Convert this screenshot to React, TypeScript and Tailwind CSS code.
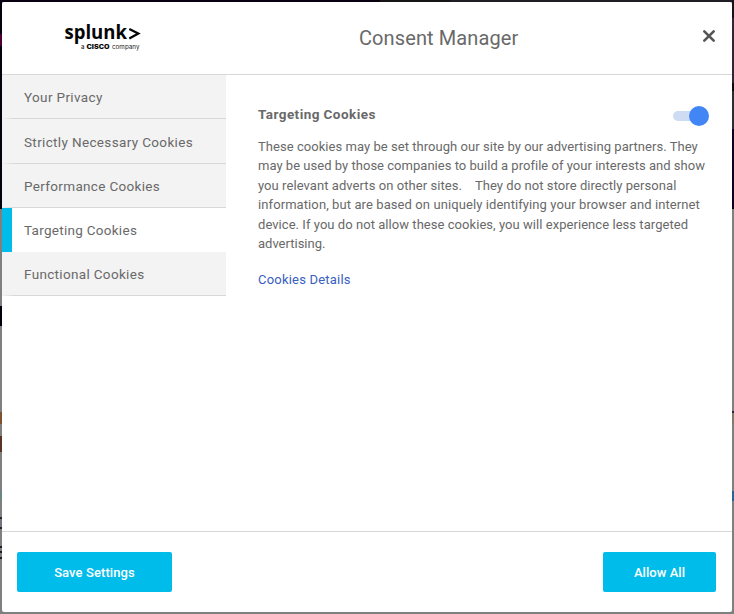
import React from "react";

const tabs = [
  { label: "Your Privacy", box: "h-[44px]", text: "tracking-[0.36px]" },
  { label: "Strictly Necessary Cookies", box: "h-[45px]", text: "tracking-[0.35px]" },
  { label: "Performance Cookies", box: "h-[44px]", text: "tracking-[0.33px]" },
  { label: "Targeting Cookies", box: "h-[44px]", text: "tracking-[0.28px]", active: true },
  { label: "Functional Cookies", box: "h-[44px]", text: "tracking-[0.33px]" },
];

const lines = [
  { text: "These cookies may be set through our site by our advertising partners. They", css: "tracking-[0.045px]" },
  { text: "may be used by those companies to build a profile of your interests and show", css: "tracking-[0.025px]" },
  { text: "you relevant adverts on other sites.\u00a0\u00a0\u00a0 They do not store directly personal", css: "tracking-[0.065px]" },
  { text: "information, but are based on uniquely identifying your browser and internet", css: "tracking-[0.09px]" },
  { text: "device. If you do not allow these cookies, you will experience less targeted", css: "tracking-[0.05px]" },
  { text: "advertising.", css: "tracking-[0px]" },
];

const leftEdge = [
  "h-[34px] bg-[#07000f]", "h-[12px] bg-[#4d0033]", "h-[163px] bg-[#07000f]",
  "h-[97px] bg-[#7f7f7f]", "h-[20px] bg-[#02000c]", "h-[86px] bg-[#7f7f7f]",
  "h-[12px] bg-[#80512a]", "h-[12px] bg-[#7f7f7f]", "h-[16px] bg-[#593323]",
  "h-[39px] bg-[#7f7f7f]", "h-[9px] bg-[#6b8585]", "h-[17px] bg-[#7f7f7f]",
  "h-[2px] bg-[#252535]", "h-[8px] bg-[#74747a]", "h-[2px] bg-[#252535]",
  "h-[17px] bg-[#7f7f7f]", "h-[2px] bg-[#1c1c28]", "h-[3px] bg-[#7f7f7f]",
  "h-[2px] bg-[#1c1c28]", "h-[4px] bg-[#7f7f7f]", "h-[2px] bg-[#1c1c28]", "grow bg-[#7f7f7f]",
];

const rightEdge = [
  "h-[18px] bg-[#17131c]", "h-[65px] bg-[#302638]", "h-[8px] bg-[#0c0b10]",
  "h-[38px] bg-[#2d2b34]", "h-[80px] bg-[#0b001e]", "h-[202px] bg-[#7f7f7f]",
  "h-[2px] bg-[#252535]", "h-[11px] bg-[#817969]", "h-[67px] bg-[#7f7f7f]",
  "h-[10px] bg-[#2b628f]", "grow bg-[#7f7f7f]",
];

function Edge({ parts }: { parts: string[] }) {
  return (
    <div className="flex w-[2px] shrink-0 flex-col">
      {parts.map((part, i) => <div key={i} className={part} />)}
    </div>
  );
}

function Logo() {
  return (
    <svg width="78" height="30" viewBox="0 0 78 30" className="block overflow-visible" aria-label="splunk, a Cisco company">
      <text x="0.5" y="17.2" fontFamily="Open Sans, sans-serif" fontWeight="700" fontSize="20" textLength="62.5" lengthAdjust="spacingAndGlyphs" fill="#050505">splunk</text>
      <path d="M65.3 7 74.3 11.6 65.3 16.5" fill="none" stroke="#050505" strokeWidth="2.3" />
      <text x="17" y="27" fontFamily="Inter, sans-serif" fontWeight="600" fontSize="6" fill="#333">a</text>
      <text x="22.5" y="27" fontFamily="Inter, sans-serif" fontWeight="900" fontSize="6" textLength="23" lengthAdjust="spacingAndGlyphs" fill="#050505">CISCO</text>
      <text x="48" y="27" fontFamily="Inter, sans-serif" fontSize="6" textLength="27.5" lengthAdjust="spacingAndGlyphs" fill="#222">company</text>
    </svg>
  );
}

export default function App() {
  return (
    <div className="flex h-[614px] w-[734px] flex-col overflow-hidden bg-[#7f7f7f] font-['Roboto',sans-serif] text-[#696969]">
      <div className="flex h-[2px] shrink-0">
        <div className="w-[380px] bg-[#080010]" />
        <div className="w-[70px] bg-[#171417]" />
        <div className="grow bg-[#211d24]" />
      </div>
      <div className="-mt-[2px] flex grow">
        <Edge parts={leftEdge} />
        <main className="my-[2px] flex w-[730px] flex-col overflow-hidden rounded-[2px] bg-white">
          <header className="flex h-[73px] shrink-0 items-start border-b border-[#d8d8d8]">
            <div className="w-[234px] pl-[62px] pt-[20px]"><Logo /></div>
            <h1 className="w-[406px] whitespace-nowrap pl-[123px] pt-[22px] text-[20px] leading-[28px] tracking-[0.1px]">Consent Manager</h1>
            <button aria-label="Close" className="ml-[60px] mt-[27px]">
              <svg width="14" height="14" viewBox="0 0 14 14" fill="none" stroke="#565656" strokeWidth="2.6" strokeLinecap="round"><path d="m2.3 2.3 9.4 9.4M11.7 2.3l-9.4 9.4" /></svg>
            </button>
          </header>
          <div className="flex h-[456px] shrink-0">
            <nav className="w-[224px] shrink-0">
              {tabs.map((tab) => (
                <div key={tab.label} className={`${tab.box} flex flex-col ${tab.active ? "border-l-[10px] border-[#00bceb] bg-white pl-[12px]" : "bg-[#f3f3f3]"}`}>
                  <div className={`flex grow items-center whitespace-nowrap text-[13.5px] leading-[20px] ${tab.active ? "" : "pl-[22px] pt-[1px]"}`}><span className={tab.text}>{tab.label}</span></div>
                  {!tab.active && <div className="h-px bg-linear-to-r from-[#f3f3f3] to-[#d8d8d8] to-[12px]" />}
                </div>
              ))}
            </nav>
            <section className="w-[506px] pl-[32px] pr-[23px] pt-[28px]">
              <div className="flex h-[24px] items-center justify-between">
                <h2 className="-mt-[2px] whitespace-nowrap text-[13.5px] font-bold leading-[20px] tracking-[0.44px]">Targeting Cookies</h2>
                <button aria-label="Targeting Cookies" className="mt-[2px] flex h-[20px] w-[36px] items-center">
                  <span className="h-[10px] w-[20px] shrink-0 rounded-l-full bg-[#cddcf2]" />
                  <span className="-ml-[4px] size-[20px] shrink-0 rounded-full bg-[#4285f4]" />
                </button>
              </div>
              <p className="mt-[9.5px] text-[13px] leading-[19.5px]">
                {lines.map((line) => <span key={line.text} className="block whitespace-nowrap"><span className={line.css}>{line.text}</span></span>)}
              </p>
              <a className="mt-[16.5px] block whitespace-nowrap text-[13px] leading-[20px] tracking-[0.2px] text-[#3860be]">Cookies Details</a>
            </section>
          </div>
          <footer className="flex grow items-start justify-between border-t border-[#d8d8d8] pl-[15px] pr-[16px] pt-[20px] text-[13px] font-medium text-white">
            <button className="h-[40px] w-[155px] rounded-[2px] bg-[#00bceb] pt-[2px] tracking-[0.1px]">Save Settings</button>
            <button className="h-[40px] w-[113px] rounded-[2px] bg-[#00bceb] pt-[2px] tracking-[0.05px]">Allow All</button>
          </footer>
        </main>
        <Edge parts={rightEdge} />
      </div>
    </div>
  );
}
